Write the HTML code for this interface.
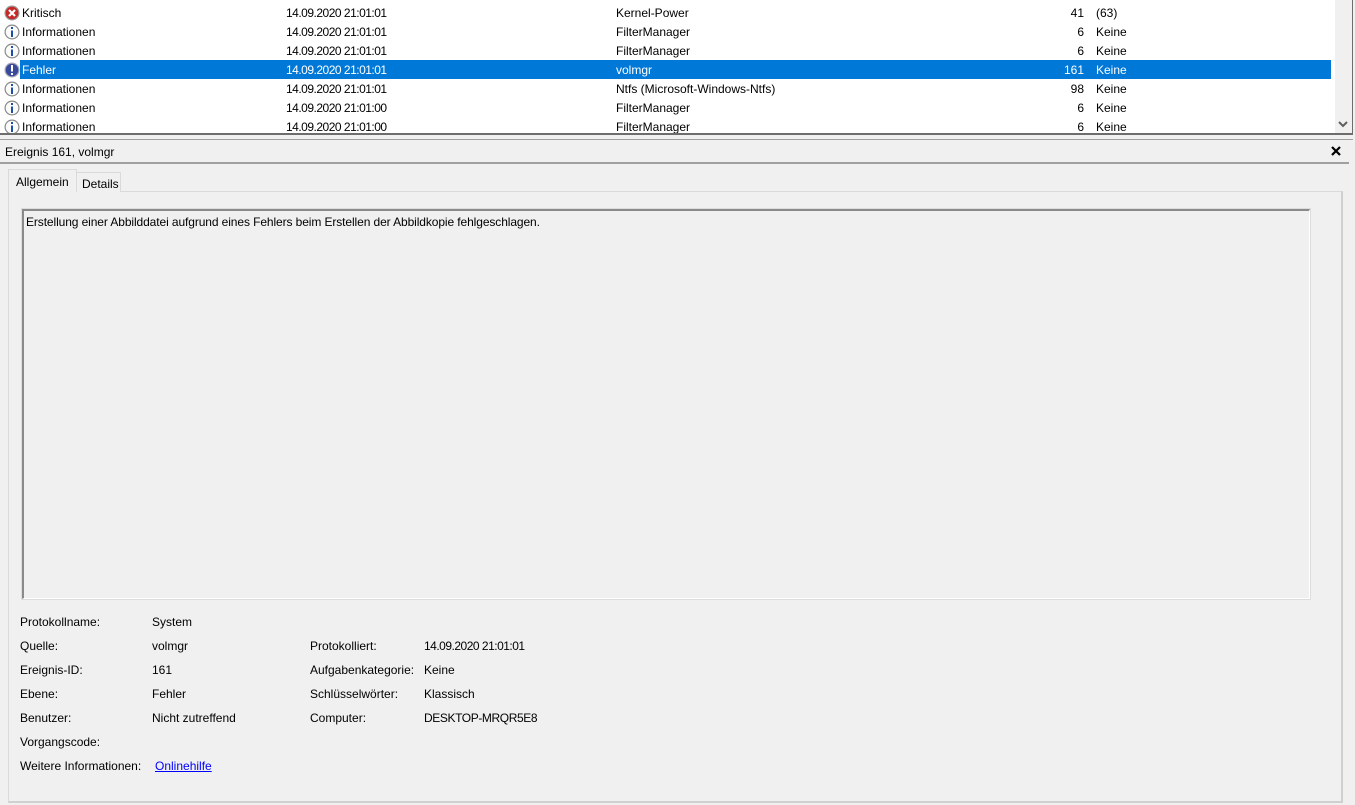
<!DOCTYPE html>
<html><head><meta charset="utf-8"><style>
*{margin:0;padding:0;box-sizing:border-box}
body{width:1355px;height:805px;background:#f0f0f0;font-family:"Liberation Sans",sans-serif;font-size:12px;color:#000;position:relative;overflow:hidden}
.abs{position:absolute}
#list{left:0;top:0;width:1353px;height:135px;background:#fff;border-right:2px solid #6d6d6d;border-bottom:2px solid #6d6d6d}
#sb{left:1335px;top:0;width:17px;height:133px;background:#f0f0f0}
.row{position:absolute;left:0;width:1335px;height:19px;line-height:21px;white-space:nowrap}
.row span{position:absolute;top:0}
.d{letter-spacing:-0.5px}
.sel{background:#0078d7;color:#fff}
.ic{position:absolute;left:4px;top:2px;width:16px;height:16px}
.t{margin-top:1px}
</style></head><body>
<div id="list" class="abs"></div>
<div id="sb" class="abs"><svg style="position:absolute;left:3px;top:120px" width="10" height="8"><path d="M1 2 L5 6 L9 2" stroke="#606060" stroke-width="2" fill="none"/></svg></div>

<div class="row" style="top:3px"><svg class="ic" viewBox="0 0 16 16"><circle cx="8" cy="8" r="7.5" fill="#999"/><circle cx="8" cy="8" r="6.3" fill="#c62828"/><path d="M5 5L11 11M11 5L5 11" stroke="#fff" stroke-width="2.2"/></svg><span style="left:22px">Kritisch</span><span class="d" style="left:286px">14.09.2020 21:01:01</span><span style="left:616px">Kernel-Power</span><span style="left:1040px;width:44px;text-align:right">41</span><span style="left:1096px">(63)</span></div>
<div class="row" style="top:22px"><svg class="ic" viewBox="0 0 16 16"><circle cx="8" cy="8" r="7.5" fill="#888"/><circle cx="8" cy="8" r="6.3" fill="#fafafa"/><rect x="7" y="3" width="2" height="2" fill="#1c4fa8"/><rect x="7" y="6.5" width="2" height="6.5" fill="#1c4fa8"/></svg><span style="left:22px">Informationen</span><span class="d" style="left:286px">14.09.2020 21:01:01</span><span style="left:616px">FilterManager</span><span style="left:1040px;width:44px;text-align:right">6</span><span style="left:1096px">Keine</span></div>
<div class="row" style="top:41px"><svg class="ic" viewBox="0 0 16 16"><circle cx="8" cy="8" r="7.5" fill="#888"/><circle cx="8" cy="8" r="6.3" fill="#fafafa"/><rect x="7" y="3" width="2" height="2" fill="#1c4fa8"/><rect x="7" y="6.5" width="2" height="6.5" fill="#1c4fa8"/></svg><span style="left:22px">Informationen</span><span class="d" style="left:286px">14.09.2020 21:01:01</span><span style="left:616px">FilterManager</span><span style="left:1040px;width:44px;text-align:right">6</span><span style="left:1096px">Keine</span></div>
<div class="row" style="top:60px"><svg class="ic" viewBox="0 0 16 16"><circle cx="8" cy="8" r="7.5" fill="#aab"/><circle cx="8" cy="8" r="6.3" fill="#3a4a9a"/><rect x="7" y="3" width="2" height="6.5" fill="#fff"/><rect x="7" y="11" width="2" height="2" fill="#fff"/></svg><div class="sel" style="position:absolute;left:20px;top:0;width:1311px;height:19px"></div><span style="left:22px;color:#fff">Fehler</span><span class="d" style="left:286px;color:#fff">14.09.2020 21:01:01</span><span style="left:616px;color:#fff">volmgr</span><span style="left:1040px;width:44px;text-align:right;color:#fff">161</span><span style="left:1096px;color:#fff">Keine</span></div>
<div class="row" style="top:79px"><svg class="ic" viewBox="0 0 16 16"><circle cx="8" cy="8" r="7.5" fill="#888"/><circle cx="8" cy="8" r="6.3" fill="#fafafa"/><rect x="7" y="3" width="2" height="2" fill="#1c4fa8"/><rect x="7" y="6.5" width="2" height="6.5" fill="#1c4fa8"/></svg><span style="left:22px">Informationen</span><span class="d" style="left:286px">14.09.2020 21:01:01</span><span style="left:616px">Ntfs (Microsoft-Windows-Ntfs)</span><span style="left:1040px;width:44px;text-align:right">98</span><span style="left:1096px">Keine</span></div>
<div class="row" style="top:98px"><svg class="ic" viewBox="0 0 16 16"><circle cx="8" cy="8" r="7.5" fill="#888"/><circle cx="8" cy="8" r="6.3" fill="#fafafa"/><rect x="7" y="3" width="2" height="2" fill="#1c4fa8"/><rect x="7" y="6.5" width="2" height="6.5" fill="#1c4fa8"/></svg><span style="left:22px">Informationen</span><span class="d" style="left:286px">14.09.2020 21:01:00</span><span style="left:616px">FilterManager</span><span style="left:1040px;width:44px;text-align:right">6</span><span style="left:1096px">Keine</span></div>
<div class="row" style="top:117px;height:16px;overflow:hidden"><svg class="ic" viewBox="0 0 16 16"><circle cx="8" cy="8" r="7.5" fill="#888"/><circle cx="8" cy="8" r="6.3" fill="#fafafa"/><rect x="7" y="3" width="2" height="2" fill="#1c4fa8"/><rect x="7" y="6.5" width="2" height="6.5" fill="#1c4fa8"/></svg><span style="left:22px">Informationen</span><span class="d" style="left:286px">14.09.2020 21:01:00</span><span style="left:616px">FilterManager</span><span style="left:1040px;width:44px;text-align:right">6</span><span style="left:1096px">Keine</span></div>

<div class="abs" style="left:0;top:139px;width:1353px;height:1px;background:#a0a0a0"></div>
<div class="abs" style="left:5px;top:145px">Ereignis 161, volmgr</div>
<svg class="abs" style="left:1331px;top:146px" width="10" height="10"><path d="M1 1L9 9M9 1L1 9" stroke="#000" stroke-width="2.2"/></svg>
<div class="abs" style="left:0;top:162px;width:1349px;height:2px;background:#a0a0a0"></div>

<div class="abs" style="left:8px;top:191px;width:1335px;height:612px;border:1px solid #dadada;border-right:2px solid #d0d0d0;border-bottom:2px solid #d0d0d0;background:#f0f0f0"></div>
<div class="abs" style="left:76px;top:172px;width:45px;height:20px;border:1px solid #dadada;border-bottom:none;background:#f0f0f0;padding:4px 0 0 5px">Details</div>
<div class="abs" style="left:8px;top:169px;width:69px;height:23px;border:1px solid #dadada;border-bottom:none;background:#f0f0f0;padding:5px 0 0 7px">Allgemein</div>

<div class="abs" style="left:22px;top:209px;width:1288px;height:390px;border-top:2px solid #8a8a8a;border-left:2px solid #8a8a8a;border-right:1px solid #fff;border-bottom:1px solid #fff;background:#f0f0f0;outline:1px solid #dcdcdc;padding:4px 0 0 2px;letter-spacing:-0.1px">Erstellung einer Abbilddatei aufgrund eines Fehlers beim Erstellen der Abbildkopie fehlgeschlagen.</div>

<div class="abs" style="left:20px;top:615px">Protokollname:</div><div class="abs" style="left:152px;top:615px">System</div>
<div class="abs" style="left:20px;top:639px">Quelle:</div><div class="abs" style="left:152px;top:639px">volmgr</div>
<div class="abs" style="left:310px;top:639px">Protokolliert:</div><div class="abs d" style="left:424px;top:639px">14.09.2020 21:01:01</div>
<div class="abs" style="left:20px;top:663px">Ereignis-ID:</div><div class="abs" style="left:152px;top:663px">161</div>
<div class="abs" style="left:310px;top:663px">Aufgabenkategorie:</div><div class="abs" style="left:424px;top:663px">Keine</div>
<div class="abs" style="left:20px;top:687px">Ebene:</div><div class="abs" style="left:152px;top:687px">Fehler</div>
<div class="abs" style="left:310px;top:687px">Schlüsselwörter:</div><div class="abs" style="left:424px;top:687px">Klassisch</div>
<div class="abs" style="left:20px;top:711px">Benutzer:</div><div class="abs" style="left:152px;top:711px">Nicht zutreffend</div>
<div class="abs" style="left:310px;top:711px">Computer:</div><div class="abs" style="left:424px;top:711px;letter-spacing:-0.4px">DESKTOP-MRQR5E8</div>
<div class="abs" style="left:20px;top:735px">Vorgangscode:</div>
<div class="abs" style="left:20px;top:759px">Weitere Informationen:</div><div class="abs" style="left:155px;top:759px;color:#0000ff;text-decoration:underline">Onlinehilfe</div>
</body></html>
